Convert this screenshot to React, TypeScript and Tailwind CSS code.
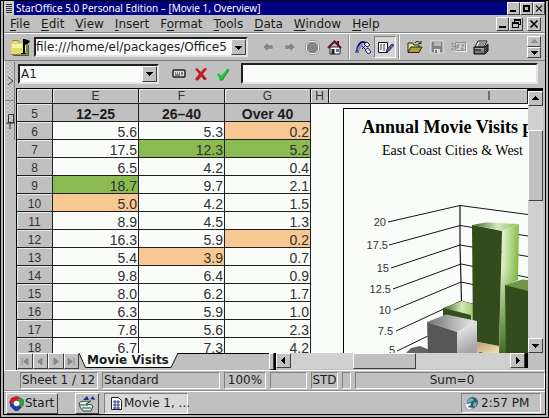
import React from "react";

const raised =
  "border border-t-white border-l-white border-r-[#404040] border-b-[#404040] bg-[#c0c0c0]";
const sunken =
  "border border-t-[#808080] border-l-[#808080] border-r-white border-b-white";
const field =
  "border-2 border-t-[#202020] border-l-[#202020] border-r-[#e4e4e4] border-b-[#e4e4e4] bg-[#fafcfa]";

type Dir = "up" | "down" | "left" | "right";
const triangles: Record<Dir, string> = {
  up: "M1 6h7L4.5 2z",
  down: "M1 3h7L4.5 7z",
  left: "M6 1v7L2 4.5z",
  right: "M3 1v7l4-3.500z",
};

function Triangle({ dir, color = "#000" }: { dir: Dir; color?: string }) {
  return (
    <svg width="9" height="9" viewBox="0 0 9 9" shapeRendering="crispEdges">
      <path d={triangles[dir]} fill={color} />
    </svg>
  );
}

function ArrowButton({ dir, label, className = "" }: { dir: Dir; label: string; className?: string }) {
  return (
    <button aria-label={label} className={`flex shrink-0 items-center justify-center ${raised} ${className}`}>
      <Triangle dir={dir} />
    </button>
  );
}

function TitleBar() {
  return (
    <header className="flex h-[14px] shrink-0 items-center bg-[#000080] text-white">
      <button aria-label="System menu" className="mr-[2px] flex h-[14px] w-[10px] flex-col items-center justify-center gap-px bg-[#d0d0d0]">
        <svg width="8" height="10" viewBox="0 0 8 10" shapeRendering="crispEdges">
          <path d="M1 1h6M1 3h6M1 5h6M1 7h6M1 9h6" transform="translate(0 .5)" stroke="#333" />
        </svg>
      </button>
      <h1 className="flex-1 truncate font-['Noto_Sans',sans-serif] text-[10px] leading-[14px]">
        StarOffice 5.0 Personal Edition – [Movie 1, Overview]
      </h1>
      <button aria-label="Minimize" className={`h-[13px] w-[13px] ${raised}`}>
        <svg width="11" height="11" viewBox="0 0 11 11"><path d="M2 7h6v2H2z" /></svg>
      </button>
      <button aria-label="Maximize" className={`h-[13px] w-[13px] ${raised}`}>
        <svg width="11" height="11" viewBox="0 0 11 11"><path d="M3 3h5v5H3z" fill="none" stroke="#000" strokeWidth="2" /></svg>
      </button>
      <button aria-label="Close" className={`h-[13px] w-[12px] ${raised}`}>
        <svg width="10" height="11" viewBox="0 0 10 11"><path d="M2 2.500l6 6M8 2.500l-6 6" stroke="#222" strokeWidth="1.200" /></svg>
      </button>
    </header>
  );
}

const menus: [string, string, string][] = [
  ["", "F", "ile"],
  ["", "E", "dit"],
  ["", "V", "iew"],
  ["", "I", "nsert"],
  ["F", "o", "rmat"],
  ["", "T", "ools"],
  ["", "D", "ata"],
  ["", "W", "indow"],
  ["", "H", "elp"],
];

function MenuBar() {
  return (
    <nav className="flex h-[18px] shrink-0 items-center border-b border-[#808080] pr-1 pl-[6px]">
      <div className="flex flex-1 gap-[11px]">
        {menus.map(([a, k, b]) => (
          <button key={a + k + b} className="leading-4">
            {a}
            <span className="underline underline-offset-2">{k}</span>
            {b}
          </button>
        ))}
      </div>
      <button aria-label="Minimize document" className={`h-[14px] w-[13px] ${raised}`}>
        <svg width="11" height="12" viewBox="0 0 11 12"><path d="M2 8h7v2H2z" /></svg>
      </button>
      <button aria-label="Restore document" className={`mr-1 h-[14px] w-[14px] ${raised}`}>
        <svg width="12" height="12" viewBox="0 0 12 12" shapeRendering="crispEdges">
          <path d="M4 1h7v6H9v3H2V4h2z" />
          <path d="M5 3h5v3H9V4H5zM3 6h5v3H3z" fill="#c0c0c0" />
        </svg>
      </button>
      <button aria-label="Close document" className={`h-[14px] w-[14px] ${raised}`}>
        <svg width="12" height="12" viewBox="0 0 12 12"><path d="M2.500 2.500l7 7M9.500 2.500l-7 7" stroke="#000" strokeWidth="1.700" /></svg>
      </button>
    </nav>
  );
}

function ToolButton({ label, className = "", children }: { label: string; className?: string; children: React.ReactNode }) {
  return (
    <button aria-label={label} className={`flex h-[22px] w-[22px] shrink-0 items-center justify-center ${className}`}>
      {children}
    </button>
  );
}

function Separator() {
  return <div className="h-[24px] w-[2px] shrink-0 border-r border-l border-r-white border-l-[#909090]" />;
}

function FunctionBar() {
  return (
    <div className="flex h-[28px] shrink-0 items-center border-t border-b border-t-white border-b-[#808080] pr-1 pl-[6px]">
      <svg className="mr-[4px] shrink-0" width="20" height="20" viewBox="0 0 20 20">
        <path d="M1 6l2-3h5l2 3h8v12H1z" fill="#8a8a30" />
        <path d="M1 6l2-2h5l1 2h7v11H1z" fill="#dede6c" />
        <path d="M2 7h10v4H2z" fill="#f4f4a8" />
        <path d="M16 8h2v10H3v1h16V8z" fill="#555" />
        <path d="M13 17V2h2v15zM15 2l5 2-1 2-4 2zM11 16h5v1h-5z" fill="#000" />
      </svg>
      <div className={`mr-[9px] flex h-[20px] w-[214px] ${field}`}>
        <input
          aria-label="Location"
          className="min-w-0 flex-1 bg-transparent leading-4 outline-none"
          defaultValue="file:///home/el/packages/Office5"
        />
        <ArrowButton dir="down" label="Show locations" className="w-[15px]" />
      </div>
      <ToolButton label="Back">
        <svg width="14" height="14" viewBox="0 0 12 12"><path d="M1.500 6L6 1.500V4h4.500v4H6v2.500z" fill="#858585" stroke="#dedede" strokeWidth=".5" /></svg>
      </ToolButton>
      <ToolButton label="Forward">
        <svg width="14" height="14" viewBox="0 0 12 12"><path d="M10.500 6L6 1.500V4H1.500v4H6v2.500z" fill="#858585" stroke="#dedede" strokeWidth=".5" /></svg>
      </ToolButton>
      <ToolButton label="Stop">
        <svg width="15" height="15" viewBox="0 0 15 15">
          <path d="M5 .5h5L14.500 5v5L10 14.500H5L.5 10V5z" fill="#f0f0f0" stroke="#999" />
          <path d="M5 2h5l3 3v5l-3 3H5l-3-3V5z" fill="#858585" />
        </svg>
      </ToolButton>
      <ToolButton label="Home" className="mr-[3px]">
        <svg width="15" height="15" viewBox="0 0 15 15">
          <path d="M3 7h10v7H3z" fill="#fff" stroke="#222" />
          <path d="M10 1h2v5h-2z" fill="#401010" />
          <path d="M1 8l6.500-6.500L14 8" fill="none" stroke="#6a1020" strokeWidth="2" />
          <path d="M4.500 9h3v5h-3z" fill="#222" />
          <path d="M9 9h3v3H9z" fill="#5577b0" />
        </svg>
      </ToolButton>
      <Separator />
      <ToolButton label="Hyperlink" className="ml-[2px]">
        <svg width="17" height="15" viewBox="0 0 17 15">
          <path d="M2 11C3 5 5 2 8 2s3 1 5 4" fill="none" stroke="#10105a" strokeWidth="2.200" />
          <path d="M2 10l1-3 3-3 2 1-2 3-2 3z" fill="#7a8ed0" />
          <path d="M9 4l3-2 3 3-3 2zM10 10l3-2 3 4-3 2z" fill="#e8e8f4" stroke="#222270" />
          <path d="M0 12h4M7 6l3 3M7 9l3-3" stroke="#18186a" />
        </svg>
      </ToolButton>
      <ToolButton label="Edit file" className={`mr-[2px] bg-[#d6d6d6] ${sunken}`}>
        <svg width="17" height="14" viewBox="0 0 17 14">
          <path d="M1.500 2.500h9v10h-9z" fill="#fff" stroke="#111" />
          <path d="M3 5h2M3 7h2M3 9h2M7 4v7" stroke="#333" />
          <path d="M9 12l1-3 5-5 2 1-5 6z" fill="#4c62b8" stroke="#14145a" strokeWidth=".7" />
        </svg>
      </ToolButton>
      <Separator />
      <ToolButton label="Open" className="ml-[4px]">
        <svg width="16" height="14" viewBox="0 0 16 14">
          <path d="M1 12V3h5l1 2h5v2" fill="#e4e08a" stroke="#222" />
          <path d="M1 12.500L4 7h11l-3 5.500z" fill="#a8a030" stroke="#222" />
          <path d="M8 3c1-2 4-2 5 0M11.500 3.500H14V1" fill="none" stroke="#111" />
        </svg>
      </ToolButton>
      <ToolButton label="Save">
        <svg width="14" height="14" viewBox="0 0 14 14">
          <path d="M1 1h12v12H1z" fill="#828282" stroke="#e4e4e4" />
          <path d="M4 1h7v5H4z" fill="#b8b8b8" />
          <path d="M4 9h6v4H4z" fill="#dcdcdc" />
          <path d="M5 10h2v3H5z" fill="#777" />
        </svg>
      </ToolButton>
      <ToolButton label="Send mail">
        <svg width="16" height="12" viewBox="0 0 16 12">
          <path d="M4.500 1.500h10v8h-10z" fill="#d0d0d0" stroke="#909090" />
          <path d="M0 3h3M1 5.500h3M0 8h3M6 4h3M6 6h2M6 4v4M10 4h3l-3 4h3" fill="none" stroke="#858585" />
          <path d="M4 10.500h11.500V2" fill="none" stroke="#eee" />
        </svg>
      </ToolButton>
      <ToolButton label="Print">
        <svg width="16" height="15" viewBox="0 0 16 15">
          <path d="M5 1h9l-3 6H2z" fill="#fff" stroke="#111" />
          <path d="M6 3h6M5 5h6" stroke="#222" />
          <path d="M1 7h11l3-3v7l-3 3H1z" fill="#444" stroke="#111" />
          <path d="M2 8.500h9M2 12h9" stroke="#aaa" />
          <path d="M8 10h3" stroke="#e8e080" />
        </svg>
      </ToolButton>
      <div className="ml-auto flex w-[14px] flex-col">
        <button aria-label="Scroll toolbar up" className={`flex h-[11px] items-center justify-center overflow-hidden ${raised}`}>
          <Triangle dir="up" color="#909090" />
        </button>
        <ArrowButton dir="down" label="Scroll toolbar down" className="h-[11px] overflow-hidden" />
      </div>
    </div>
  );
}

function SideStrip() {
  return (
    <aside className="w-[11px] shrink-0">
      <svg width="11" height="80" viewBox="0 0 11 80">
        <defs>
          <pattern id="grip" width="4" height="4" patternUnits="userSpaceOnUse">
            <path d="M0 0h2v2H0zM2 2h2v2H2z" fill="#b0b0b0" />
          </pattern>
        </defs>
        <path d="M2 1h7v78H2z" fill="#d2d2d2" />
        <path d="M2 1h7v78H2z" fill="url(#grip)" />
        <path d="M9.500 1v78M0 39.500h10" stroke="#808080" />
        <path d="M3 16l5 4-5 4" fill="none" stroke="#444" />
        <path d="M3.500 53.500h5v8h-5zM1 62h9M5 62v6" fill="none" stroke="#333" />
      </svg>
    </aside>
  );
}

function FormulaBar() {
  return (
    <div className="flex h-[27px] shrink-0 items-center pr-[5px] pb-[2px] pl-[2px]">
      <div className={`flex h-[20px] w-[141px] shrink-0 ${field}`}>
        <input aria-label="Cell" className="min-w-0 flex-1 bg-transparent pl-px leading-4 outline-none" defaultValue="A1" />
        <ArrowButton dir="down" label="Show cell names" className="w-[15px]" />
      </div>
      <div className="flex flex-1 items-center">
        <button aria-label="Functions" className="ml-[13px]">
          <svg width="14" height="10" viewBox="0 0 14 10">
            <rect x="1" y="1" width="12" height="7" rx="1" fill="#ddd" stroke="#222" strokeWidth="1.500" />
            <path d="M3 4h1M5 4h1M7 4h1M3 6h5M10 3v3" stroke="#222" />
          </svg>
        </button>
        <button aria-label="Cancel" className="ml-[8px]">
          <svg width="14" height="14" viewBox="0 0 14 14">
            <path d="M1 2l2-1 4 4c1-2 3-4 5-4l1 1-4 5 4 5-3 1-3-4-4 5-2-2 4-5z" fill="#cc1c24" />
            <path d="M12 13L7.500 9 4 13" fill="none" stroke="#600" strokeWidth=".7" />
          </svg>
        </button>
        <button aria-label="Accept" className="ml-[8px]">
          <svg width="14" height="14" viewBox="0 0 14 14">
            <path d="M1 7l2-1 2 3 7-8 1 2-7 10H4z" fill="#1ec83c" />
            <path d="M13 3L6.500 13H4" fill="none" stroke="#0a6a18" strokeWidth=".8" />
          </svg>
        </button>
        <input aria-label="Formula" className={`ml-[11px] h-[21px] min-w-0 flex-1 outline-none ${field}`} />
      </div>
    </div>
  );
}

type Mark = "hi" | "lo" | "";
type Row = [number, string, Mark, string, Mark, string, Mark];
const rows: Row[] = [
  [6, "5.6", "", "5.3", "", "0.2", "lo"],
  [7, "17.5", "", "12.3", "hi", "5.2", "hi"],
  [8, "6.5", "", "4.2", "", "0.4", ""],
  [9, "18.7", "hi", "9.7", "", "2.1", ""],
  [10, "5.0", "lo", "4.2", "", "1.5", ""],
  [11, "8.9", "", "4.5", "", "1.3", ""],
  [12, "16.3", "", "5.9", "", "0.2", "lo"],
  [13, "5.4", "", "3.9", "lo", "0.7", ""],
  [14, "9.8", "", "6.4", "", "0.9", ""],
  [15, "8.0", "", "6.2", "", "1.7", ""],
  [16, "6.3", "", "5.9", "", "1.0", ""],
  [17, "7.8", "", "5.6", "", "2.3", ""],
  [18, "6.7", "", "7.3", "", "4.2", ""],
];
const markColors: Record<Mark, string> = { hi: "bg-[#8cba52]", lo: "bg-[#f8c892]", "": "bg-[#fafcfa]" };

function Cell({ value, mark }: { value: string; mark: Mark }) {
  return (
    <td className={`border-r border-b border-[#202020] p-0 pt-[3px] pr-px text-right text-[14px] leading-[14px] text-[#303030] ${markColors[mark]}`}>
      {value}
    </td>
  );
}

const headCell = "border-r border-b border-[#202020] bg-[#c0c0c0] p-0 font-normal shadow-[inset_1px_1px_0_#e8e8e8]";

function Sheet() {
  return (
    <table className="w-[294px] shrink-0 table-fixed border-separate border-spacing-0 self-start font-['Liberation_Sans',Arial,sans-serif]">
      <colgroup>
        <col className="w-[36px]" />
        <col className="w-[86px]" />
        <col className="w-[86px]" />
        <col className="w-[86px]" />
      </colgroup>
      <thead>
        <tr className="h-[15px] text-[12px] leading-[14px] text-[#333]">
          <td className={headCell} />
          <th scope="col" className={headCell}>E</th>
          <th scope="col" className={headCell}>F</th>
          <th scope="col" className={headCell}>G</th>
        </tr>
      </thead>
      <tbody>
        <tr className="h-[18px] text-[14px] leading-[14px]">
          <th scope="row" className={`${headCell} pt-[2px] text-[12px] text-[#333]`}>5</th>
          {["12–25", "26–40", "Over 40"].map((t) => (
            <td key={t} className="border-r border-b border-[#202020] bg-[#c0c0c0] p-0 pt-[2px] text-center font-bold">{t}</td>
          ))}
        </tr>
        {rows.map(([n, e, em, f, fm, g, gm]) => (
          <tr key={n} className="h-[18px]">
            <th scope="row" className={`${headCell} pt-[2px] text-[12px] leading-[14px] text-[#333]`}>{n}</th>
            <Cell value={e} mark={em} />
            <Cell value={f} mark={fm} />
            <Cell value={g} mark={gm} />
          </tr>
        ))}
      </tbody>
    </table>
  );
}

const axisLabels: [string, number, number][] = [
  ["20", 386, 225],
  ["17.5", 388, 248],
  ["15", 389, 271],
  ["12.5", 391, 292],
  ["10", 391, 313],
  ["7.5", 393, 334],
  ["5", 395, 353],
];

function Chart() {
  return (
    <figure className="flex min-w-0 flex-1 flex-col overflow-hidden border-t border-l border-black bg-[#fafcfa] font-['Liberation_Serif','Times_New_Roman',serif] text-black">
      <figcaption className="whitespace-nowrap">
        <h2 className="pt-[7px] pl-[18px] text-[18px] leading-[22px] font-bold">Annual Movie Visits p</h2>
        <p className="pt-[4px] pl-[38px] text-[14px] leading-[18px]">East Coast Cities &amp; West</p>
      </figcaption>
      <svg className="mt-[11px] min-h-0 w-full flex-1" viewBox="344 170 184 183" preserveAspectRatio="xMinYMin slice">
        <defs>
          <linearGradient id="greenSide" x1="0" y1="0" x2="1" y2="0.300">
            <stop offset="0" stopColor="#f4fbe8" />
            <stop offset="0.450" stopColor="#c4e0a0" />
            <stop offset="1" stopColor="#7cb840" />
          </linearGradient>
          <linearGradient id="greenFade" x1="0" y1="0" x2="0" y2="1">
            <stop offset="0.350" stopColor="#4c7a2c" stopOpacity="0" />
            <stop offset="1" stopColor="#3f6a24" />
          </linearGradient>
          <linearGradient id="greenTop" x1="0" y1="0" x2="1" y2="0">
            <stop offset="0" stopColor="#3c6420" />
            <stop offset="0.550" stopColor="#d4e8bc" />
            <stop offset="1" stopColor="#8cc058" />
          </linearGradient>
          <linearGradient id="grayTop" x1="0" y1="0" x2="1" y2="0">
            <stop offset="0" stopColor="#707070" />
            <stop offset="1" stopColor="#f0f0f0" />
          </linearGradient>
          <linearGradient id="graySide" x1="0" y1="0" x2="0.300" y2="1">
            <stop offset="0" stopColor="#fafafa" />
            <stop offset="1" stopColor="#a4a4a4" />
          </linearGradient>
          <linearGradient id="beige" x1="0" y1="0" x2="1" y2="1">
            <stop offset="0" stopColor="#b89c70" />
            <stop offset="1" stopColor="#fbe8c0" />
          </linearGradient>
        </defs>
        <g stroke="#151515" fill="none">
          <path d="M388 221L460 204.500L528 213.500" />
          <path d="M389 244L460 224.500L528 235" />
          <path d="M391 267L460 244L528 255.500" />
          <path d="M393 288L461 263L528 276.500" />
          <path d="M394 309L461 281L480 285" />
          <path d="M396 330L461 300L480 305" />
          <path d="M397 350L430 334" />
          <path d="M460 204V244L461.500 301" strokeWidth="1.200" />
        </g>
        <g fontFamily="Liberation Sans, Arial, sans-serif" fontSize="11" fill="#333" textAnchor="end">
          {axisLabels.map(([t, x, y]) => (
            <text key={t} x={x} y={y}>{t}</text>
          ))}
        </g>
        <path d="M443 307L462 300L477 304V321L443 315z" fill="url(#greenTop)" />
        <path d="M443 307L471 314V322L443 316z" fill="#34501e" />
        <path d="M477 341L500 345V353H477z" fill="url(#beige)" />
        <path d="M502 229L519 223.500L518 279L506 284V353H499z" fill="url(#greenSide)" />
        <path d="M502 229L519 223.500L518 279L506 284V353H499z" fill="url(#greenFade)" />
        <path d="M472 224L486 221.500L519 223L502 229.500z" fill="url(#greenTop)" />
        <path d="M472 224L502 230L499 345L473 340z" fill="#344c1c" />
        <path d="M505 284L522 278.500L528 279V292z" fill="#6f9648" />
        <path d="M505 284L528 290V353H506z" fill="#344c1c" />
        <path d="M405 353L411 347L420 345L430 349V353z" fill="#636363" />
        <path d="M477 353L480 351L487 353z" fill="#555" />
        <path d="M427 321L446 313.500L477 320L457 331z" fill="url(#grayTop)" />
        <path d="M427 321L457 331V353H428z" fill="#575757" />
        <path d="M457 331L477 320V353H457z" fill="url(#graySide)" />
      </svg>
    </figure>
  );
}

function ChartColumns() {
  const letter = "flex items-center justify-center border-r border-b border-[#202020] bg-[#c0c0c0] text-[12px] leading-[14px] text-[#333] shadow-[inset_1px_1px_0_#e8e8e8] font-['Liberation_Sans',Arial,sans-serif]";
  return (
    <div className="flex min-w-0 flex-1 flex-col bg-[#fafcfa]">
      <div className="flex h-[15px] shrink-0">
        <div className={`w-[18px] shrink-0 ${letter}`}>H</div>
        <div className={`min-w-0 flex-1 pl-[122px] ${letter}`}>I</div>
      </div>
      <div className="flex min-h-0 flex-1 pt-[4px] pl-[32px]">
        <Chart />
      </div>
    </div>
  );
}

function VerticalScrollbar() {
  return (
    <div className="flex w-[15px] shrink-0 flex-col bg-[#d0d0d0]">
      <div className="h-[2px] shrink-0 bg-black" />
      <ArrowButton dir="up" label="Scroll up" className="h-[15px]" />
      <div className="flex-[24_0_0]" />
      <div className={`flex-[70_0_0] ${raised}`} />
      <div className="flex-[138_0_0]" />
      <ArrowButton dir="down" label="Scroll down" className="h-[15px]" />
    </div>
  );
}

const sheetNav: [string, string][] = [
  ["First sheet", "M3 2v7M9 2v7L4.500 5.500z"],
  ["Previous sheet", "M8 2v7L3.500 5.500z"],
  ["Next sheet", "M4 2v7l4.500-3.500z"],
  ["Last sheet", "M9 2v7M3 2v7l4.500-3.500z"],
];

function SheetTabs() {
  return (
    <div className="flex h-[17px] shrink-0 items-stretch bg-[#c0c0c0]">
      <div className="flex w-[62px] shrink-0 pb-px">
        {sheetNav.map(([label, d]) => (
          <button key={label} aria-label={label} className={`flex flex-1 items-center justify-center ${raised}`}>
            <svg width="12" height="11" viewBox="0 0 12 11"><path d={d} fill="#888" stroke="#888" /></svg>
          </button>
        ))}
      </div>
      <svg className="shrink-0" width="8" height="16" viewBox="0 0 8 16">
        <path d="M0 0h8v14H6z" fill="#fafcfa" />
        <path d="M0 0l6.500 14.500H8" fill="none" stroke="#111" />
      </svg>
      <button className="h-[15px] shrink-0 border-b border-black bg-[#fafcfa] font-bold leading-[13px]">Movie Visits</button>
      <svg className="shrink-0" width="9" height="16" viewBox="0 0 9 16">
        <path d="M0 0h9L2 14H0z" fill="#fafcfa" />
        <path d="M9 0L2 14.500H0" fill="none" stroke="#111" />
      </svg>
      <div className="flex-[92_0_0] border-t border-black" />
      <div className={`w-[5px] ${raised}`} />
      <div className="w-[2px] bg-black" />
      <ArrowButton dir="left" label="Scroll left" className="h-[15px] w-[15px]" />
      <div className="flex h-[16px] flex-[220_0_0] bg-[#d0d0d0]">
        <div className="flex-[63_0_0]" />
        <div className={`flex-[62_0_0] ${raised}`} />
        <div className="flex-[95_0_0]" />
      </div>
      <ArrowButton dir="right" label="Scroll right" className="h-[15px] w-[15px]" />
      <div className="h-[15px] w-[3px] bg-black" />
      <div className="w-[15px]" />
    </div>
  );
}

function StatusBar() {
  const cell = `h-[17px] shrink-0 whitespace-nowrap leading-[15px] ${sunken}`;
  return (
    <footer className="flex h-[21px] shrink-0 items-center gap-[4px] border-t border-b border-t-white border-b-[#909090] pl-4">
      <div className={`w-[78px] pl-px ${cell}`}>Sheet 1 / 12</div>
      <div className={`w-[118px] pl-px ${cell}`}>Standard</div>
      <div className={`w-[42px] text-center ${cell}`}>100%</div>
      <div className={`w-[37px] ${cell}`} />
      <div className={`w-[27px] text-center ${cell}`}>STD</div>
      <div className={`w-[9px] ${cell}`} />
      <div className={`flex-1 pl-1 text-center ${cell}`}>Sum=0</div>
    </footer>
  );
}

function TaskBar() {
  return (
    <div className="flex h-[23px] shrink-0 items-center border-t border-white pr-1 pl-[2px]">
      <button className={`mr-[17px] flex h-[21px] w-[52px] items-center pl-[2px] ${raised}`}>
        <svg width="16" height="15" viewBox="0 0 16 15" className="shrink-0">
          <path d="M7.500 7.500L0 7l2-5 5-2 4 1z" fill="#c81e28" />
          <path d="M7.500 7.500L11 1l4 3v5l-2 2z" fill="#2d9c3c" />
          <path d="M7.500 7.500L13 11l-4 4H6L1 10V7z" fill="#2438a0" />
          <circle cx="7.500" cy="7.500" r="2.800" fill="#fff" />
        </svg>
        Start
      </button>
      <button aria-label="Show desktop" className={`mr-[5px] flex h-[21px] w-[24px] items-center justify-center ${raised}`}>
        <svg width="20" height="17" viewBox="0 0 20 17">
          <path d="M6 5l4-4 2 4zM13 4l3-3 2 4z" fill="#1c2c90" />
          <path d="M2 8c3-3 8-1 12-2l-5 3c3 1 6 0 7 2l-2 5H6l-3-4z" fill="#e8f0ee" stroke="#24483c" />
          <path d="M3 10h8M5 13h9" stroke="#24483c" />
        </svg>
      </button>
      <button className={`flex h-[21px] w-[84px] items-center bg-[#d8d8d8] pl-[5px] whitespace-nowrap ${sunken}`}>
        <svg width="13" height="15" viewBox="0 0 13 15" className="mr-px shrink-0">
          <path d="M1.500 1.500h7l3 3v9h-10z" fill="#fff" stroke="#222" />
          <path d="M3 6h7M3 9h7M3 12h7M5 4v9M8 4v9" stroke="#28388a" />
        </svg>
        Movie 1, ...
      </button>
      <div className={`ml-auto flex h-[20px] w-[80px] items-center gap-[2px] pl-[2px] ${sunken}`}>
        <svg width="15" height="14" viewBox="0 0 15 14">
          <circle cx="8.500" cy="6.500" r="5.500" fill="#2c5c7c" />
          <path d="M4 3l4-1 2 2-3 2-4 1zM10 6l3 1-1 4-3-1z" fill="#6cb4a0" />
          <path d="M0 8l7-1v2l-3 2 6 1-5 2-2-1z" fill="#f4f4f4" stroke="#557" strokeWidth=".4" />
        </svg>
        <time>2:57 PM</time>
      </div>
    </div>
  );
}

export default function App() {
  return (
    <div className="flex h-screen min-h-[300px] flex-col border border-black bg-[#b4b4b4] px-[2px] pb-[2px] font-['DejaVu_Sans',Verdana,sans-serif] text-[12px] text-[#1c1c1c]">
      <div className="flex min-h-0 flex-1 flex-col border-r border-b border-l border-black bg-[#c0c0c0]">
        <TitleBar />
        <MenuBar />
        <FunctionBar />
        <main className="flex min-h-0 flex-1 border-l border-white">
          <SideStrip />
          <div className="flex min-w-0 flex-1 flex-col pr-[2px]">
            <FormulaBar />
            <div className="flex min-h-0 flex-1 flex-col border-t border-l border-black">
              <div className="flex min-h-0 flex-1 overflow-hidden">
                <Sheet />
                <ChartColumns />
                <VerticalScrollbar />
              </div>
              <SheetTabs />
            </div>
          </div>
        </main>
        <StatusBar />
        <TaskBar />
      </div>
    </div>
  );
}
